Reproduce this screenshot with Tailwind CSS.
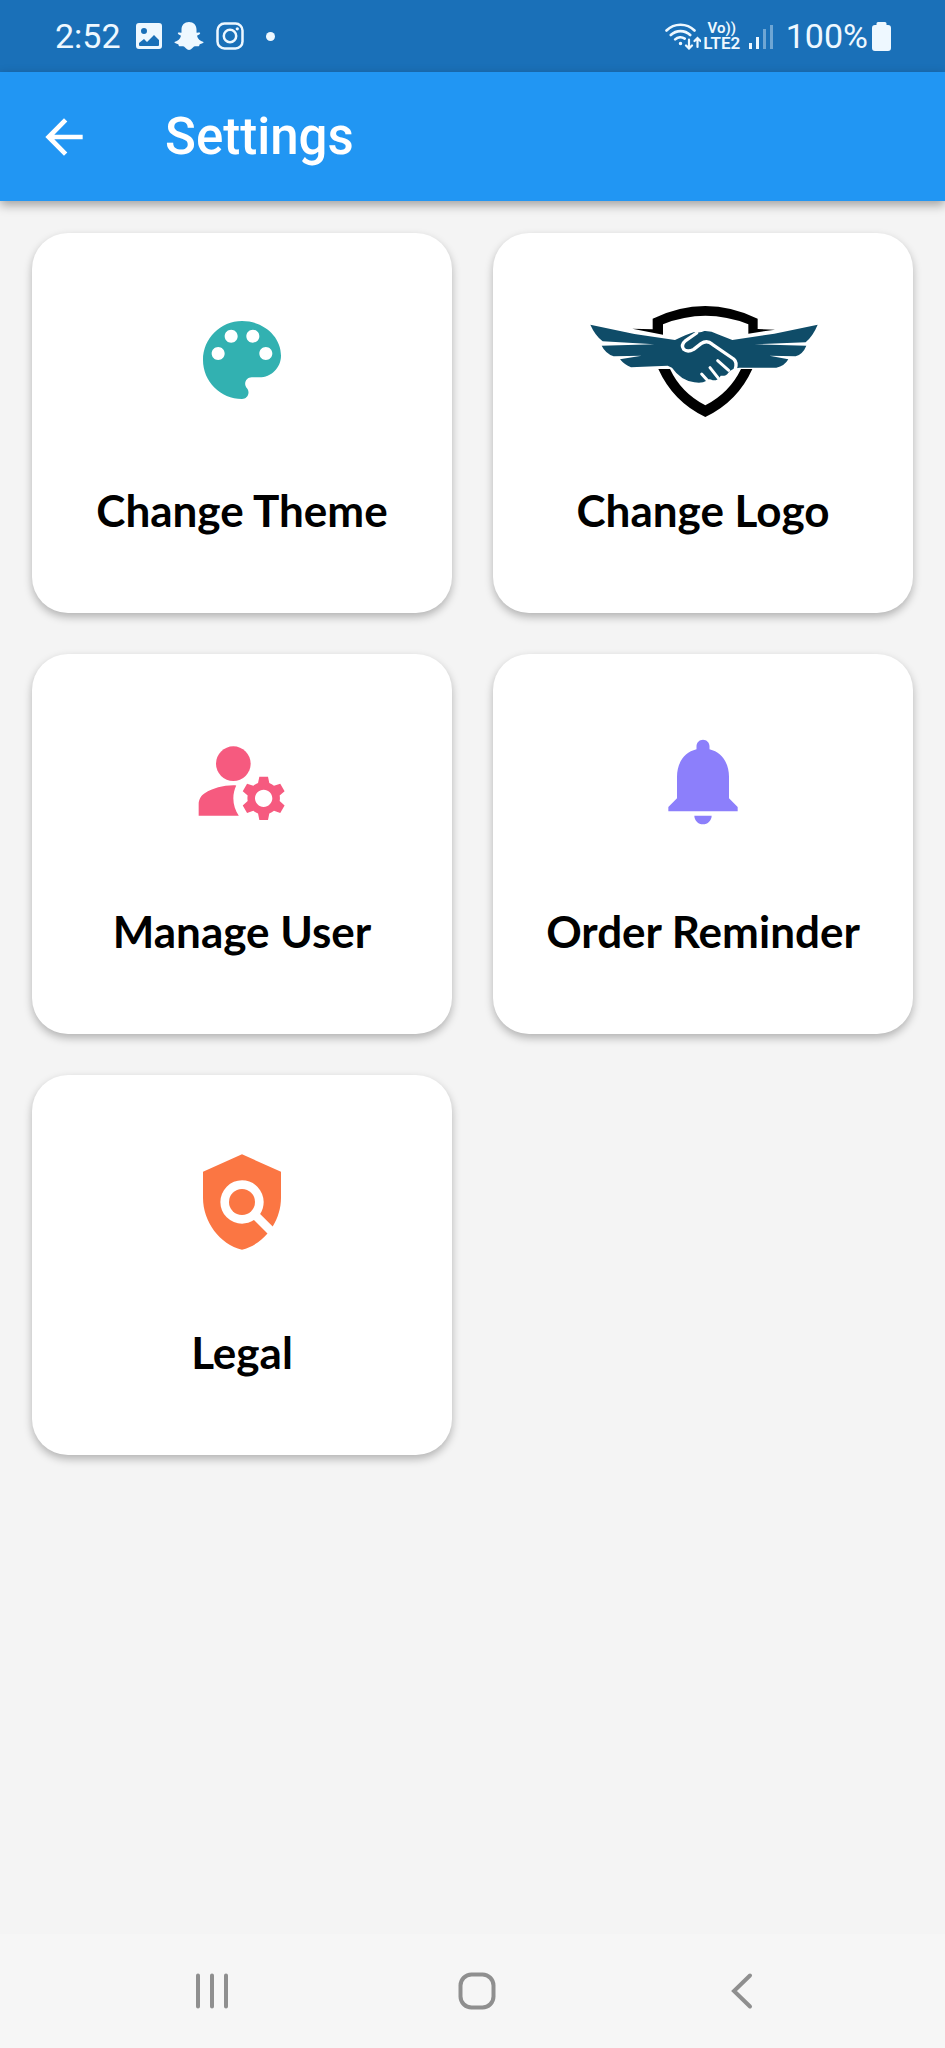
<!DOCTYPE html>
<html lang="en">
<head>
    <meta charset="UTF-8">
    <meta name="viewport" content="width=device-width, initial-scale=1.0">
    <title>Settings</title>
    <script src="https://cdn.jsdelivr.net/npm/@tailwindcss/browser@4"></script>
</head>
<body class="min-h-screen flex flex-col bg-[#f4f4f4] font-['Roboto',sans-serif]">
    <!-- Status bar -->
    <div class="h-[72px] shrink-0 bg-[#1a70b8] text-[#eef8ff] flex items-center justify-between pl-[55px] pr-[54px]">
        <div class="flex items-center">
            <span class="text-[34px] leading-10">2:52</span>
            <svg class="ml-[15px] size-[26px]" viewBox="0 0 26 26" fill="currentColor">
                <path fill-rule="evenodd" d="M3 0h20a3 3 0 0 1 3 3v20a3 3 0 0 1-3 3H3a3 3 0 0 1-3-3V3a3 3 0 0 1 3-3zM8 5a3 3 0 1 0 0 6a3 3 0 0 0 0-6zM3 22q0 1 1 1h18q1 0 1-1v-5l-5-5l-7 7l-3-3l-5 4z"/>
            </svg>
            <svg class="ml-3 w-[30px] h-7" viewBox="0 0 30 28" fill="currentColor">
                <path d="M15 0c4.500 0 7.500 3 7.500 7.500v3c1 .6 2.500-.6 3.500.3c.7 1-.8 2-3 3c.8 3.200 3 5.400 6.500 6.200c.6.900-1.500 1.800-3.700 2.200c-.6.700-.3 1.800-1.200 2c-1.200.2-3-.4-4.600.4C18.500 25.600 17.500 28 15 28s-3.500-2.400-5-3.400c-1.600-.8-3.400-.2-4.600-.4c-.9-.2-.6-1.300-1.200-2C2 21.800-.1 20.900.5 20C4 19.200 6.200 17 7 13.800c-2.200-1-3.700-2-3-3c1-.9 2.500.3 3.500-.3v-3C7.500 3 10.500 0 15 0z"/>
            </svg>
            <svg class="ml-3 size-7" viewBox="0 0 28 28" fill="none" stroke="currentColor">
                <rect x="1.500" y="1.500" width="25" height="25" rx="7" stroke-width="2.500"/>
                <circle cx="14" cy="14" r="6.200" stroke-width="2.500"/>
                <circle cx="21.300" cy="6.800" r="1.600" fill="currentColor" stroke="none"/>
            </svg>
            <span class="ml-[22px] size-[9px] rounded-full bg-current"></span>
        </div>
        <div class="flex items-center">
            <svg class="w-9 h-7" viewBox="0 0 36 28" fill="none" stroke="currentColor" stroke-width="2.600" stroke-linecap="round">
                <path d="M1.500 8.500a20 20 0 0 1 28 0M5.800 13a14 14 0 0 1 19.400 0M10.200 17.400a7.600 7.600 0 0 1 9.500-.8"/>
                <circle cx="15.500" cy="21.500" r="1" fill="currentColor" stroke-width="1.500"/>
                <path stroke-width="2.200" d="M24 17.500v8.500M21 23.500l3 3l3-3M32.500 25v-8.500M29.500 19l3-3l3 3"/>
            </svg>
            <div class="ml-[3px] w-9 flex flex-col items-center font-semibold text-[15px] leading-[15px] whitespace-nowrap">
                <span>Vo))</span>
                <span class="text-[17px] leading-[15px]">LTE2</span>
            </div>
            <div class="ml-[9px] flex items-end gap-1 h-[26px]">
                <span class="w-[3px] h-1.5 bg-current"></span>
                <span class="w-[3px] h-3 bg-current"></span>
                <span class="w-[3px] h-5 bg-current opacity-40"></span>
                <span class="w-[3px] h-6 bg-current opacity-40"></span>
            </div>
            <span class="ml-[13px] text-[34px] leading-10">100%</span>
            <svg class="ml-1 w-[19px] h-[29px]" viewBox="0 0 19 29" fill="currentColor">
                <path d="M6 0h7q1.500 0 1.500 1.500V3H16a3 3 0 0 1 3 3v20a3 3 0 0 1-3 3H3a3 3 0 0 1-3-3V6a3 3 0 0 1 3-3h1.500V1.500Q4.500 0 6 0z"/>
            </svg>
        </div>
    </div>

    <!-- App bar -->
    <header class="h-[129px] shrink-0 bg-[#2196f3] text-white flex items-center pl-9 shadow-[0_4px_10px_rgba(0,0,0,0.35)]">
        <button type="button" aria-label="Back" class="size-14">
            <svg class="size-14" viewBox="0 0 24 24" fill="currentColor">
                <path d="M20 11H7.830l5.590-5.590L12 4l-8 8 8 8 1.410-1.410L7.830 13H20v-2z"/>
            </svg>
        </button>
        <h1 class="ml-[73px] text-[51px] leading-[60px] font-medium">Settings</h1>
    </header>

    <!-- Settings cards -->
    <main class="flex-1 px-8 pt-8 pb-8">
        <div class="grid grid-cols-2 gap-[41px] font-['Lato',sans-serif] font-bold text-[44px] leading-[56px] text-black">
            <button type="button" class="h-[380px] pt-[57px] flex flex-col items-center rounded-[36px] bg-white shadow-[0_4px_8px_rgba(0,0,0,0.27)]">
                <span class="h-[140px] flex items-center">
                    <svg class="size-[104px] text-[#32b1b1]" viewBox="0 0 24 24" fill="currentColor">
                        <path d="M12 3c-4.970 0-9 4.030-9 9s4.030 9 9 9c.83 0 1.500-.67 1.500-1.500 0-.39-.15-.74-.39-1.010-.23-.26-.38-.61-.38-.99 0-.83.67-1.500 1.500-1.500H16c2.760 0 5-2.240 5-5 0-4.420-4.030-8-9-8zm-5.500 9c-.83 0-1.500-.67-1.500-1.500S5.670 9 6.500 9 8 9.670 8 10.500 7.330 12 6.500 12zm3-4C8.670 8 8 7.330 8 6.500S8.670 5 9.500 5s1.500.67 1.500 1.500S10.330 8 9.500 8zm5 0c-.83 0-1.500-.67-1.500-1.500S13.670 5 14.500 5s1.500.67 1.500 1.500S15.330 8 14.500 8zm3 4c-.83 0-1.500-.67-1.500-1.500S16.670 9 17.500 9s1.500.67 1.500 1.500-.67 1.500-1.500 1.500z"/>
                    </svg>
                </span>
                <span class="mt-[52px]">Change Theme</span>
            </button>

            <button type="button" class="h-[380px] pt-[57px] flex flex-col items-center rounded-[36px] bg-white shadow-[0_4px_8px_rgba(0,0,0,0.27)]">
                <span class="h-[140px] flex items-center">
                    <svg class="w-[265px] h-[140px]" viewBox="0 0 795 420">
                        <!-- shield -->
                        <path fill="#000" d="M245 86Q403 10 560 86V117L612 119L532 131V103Q403 52 276 103V134L184 116L245 118z"/>
                        <path fill="#000" d="M262 237H297Q330 308 403 346Q476 308 510 237H544Q500 335 403 381Q306 335 262 237z"/>
                        <!-- wings and hands -->
                        <g fill="#0f4c68">
                            <path d="M58 104L190 132L312 150Q345 134 370 126Q388 130 400 123Q420 122 440 133L484 150L610 131L740 104Q727 136 704 157L550 163L706 167Q696 192 674 199L595 197L652 208Q640 229 616 233H505L488 236Q476 242 472 248Q464 260 449 257Q443 272 425 271Q412 264 405 273Q395 280 370 277Q328 270 303 233L290 227L180 232Q160 224 147 208L212 197L128 199Q103 190 92 167L250 163L95 154Q72 136 58 104z"/>
                        </g>
                        <g fill="none" stroke="#fff" stroke-linecap="round" stroke-linejoin="round">
                            <path stroke-width="10" d="M377 129L345 151Q328 165 338 178Q350 188 368 178L390 161Q408 148 424 163L488 207Q499 217 493 236"/>
                            <path stroke-width="9" d="M440 212L473 241M417 233L443 266M392 252L409 271"/>
                        </g>
                    </svg>
                </span>
                <span class="mt-[52px]">Change Logo</span>
            </button>

            <button type="button" class="h-[380px] pt-[57px] flex flex-col items-center rounded-[36px] bg-white shadow-[0_4px_8px_rgba(0,0,0,0.27)]">
                <span class="h-[140px] flex items-center">
                    <svg class="size-[104px] text-[#f65a7f]" viewBox="0 0 24 24" fill="currentColor">
                        <circle cx="10" cy="8" r="4"/>
                        <path d="M10.670 13.020C10.450 13.010 10.230 13 10 13c-2.420 0-4.680.67-6.610 1.820C2.510 15.340 2 16.320 2 17.350V20h9.260C10.470 18.870 10 17.490 10 16c0-1.070.25-2.070.67-2.980z"/>
                        <path d="M20.750 16c0-.22-.03-.42-.06-.63l1.140-1.010-1-1.730-1.450.49c-.32-.27-.68-.48-1.080-.63L18 11h-2l-.3 1.490c-.4.15-.76.36-1.080.63l-1.450-.49-1 1.730 1.140 1.010c-.03.21-.06.41-.06.63s.03.42.06.63l-1.140 1.010 1 1.730 1.450-.49c.32.27.68.48 1.080.63L16 21h2l.3-1.490c.4-.15.76-.36 1.080-.63l1.450.49 1-1.730-1.140-1.010c.03-.21.06-.41.06-.63zM17 18c-1.100 0-2-.9-2-2s.9-2 2-2 2 .9 2 2-.9 2-2 2z"/>
                    </svg>
                </span>
                <span class="mt-[52px]">Manage User</span>
            </button>

            <button type="button" class="h-[380px] pt-[57px] flex flex-col items-center rounded-[36px] bg-white shadow-[0_4px_8px_rgba(0,0,0,0.27)]">
                <span class="h-[140px] flex items-center">
                    <svg class="size-[104px] text-[#8c7ffb]" viewBox="0 0 24 24" fill="currentColor">
                        <path d="M12 22c1.100 0 2-.9 2-2h-4c0 1.100.89 2 2 2zm6-6v-5c0-3.070-1.640-5.640-4.500-6.320V4c0-.83-.67-1.500-1.500-1.500s-1.500.67-1.500 1.500v.68C7.630 5.360 6 7.920 6 11v5l-2 2v1h16v-1l-2-2z"/>
                    </svg>
                </span>
                <span class="mt-[52px]">Order Reminder</span>
            </button>

            <button type="button" class="h-[380px] pt-[57px] flex flex-col items-center rounded-[36px] bg-white shadow-[0_4px_8px_rgba(0,0,0,0.27)]">
                <span class="h-[140px] flex items-center">
                    <svg class="size-[104px] text-[#fb7643]" viewBox="0 0 24 24" fill="currentColor">
                        <path d="M21 5l-9-4-9 4v6c0 5.550 3.840 10.740 9 12 2.300-.56 4.330-1.900 5.880-3.710l-3.120-3.120c-1.940 1.290-4.580 1.070-6.290-.64-1.950-1.950-1.950-5.120 0-7.070 1.950-1.950 5.120-1.950 7.070 0 1.710 1.710 1.920 4.350.64 6.290l2.900 2.900C20.290 15.690 21 13.380 21 11V5z"/>
                        <circle cx="12" cy="12" r="3"/>
                    </svg>
                </span>
                <span class="mt-[52px]">Legal</span>
            </button>
        </div>
    </main>

    <!-- Navigation bar -->
    <nav class="h-[114px] shrink-0 bg-[#f6f6f6] text-[#8f8f8f] flex items-center pl-20 pr-[71px]">
        <button type="button" aria-label="Recent apps" class="flex-1 flex justify-center">
            <svg class="size-10" viewBox="0 0 40 40" fill="none" stroke="currentColor" stroke-width="4" stroke-linecap="round">
                <path d="M6 4.500v31M20 4.500v31M34 4.500v31"/>
            </svg>
        </button>
        <button type="button" aria-label="Home" class="flex-1 flex justify-center">
            <svg class="size-10" viewBox="0 0 40 40" fill="none" stroke="currentColor" stroke-width="4">
                <rect x="3.500" y="3.500" width="33" height="33" rx="11"/>
            </svg>
        </button>
        <button type="button" aria-label="Back" class="flex-1 flex justify-center">
            <svg class="size-10" viewBox="0 0 40 40" fill="none" stroke="currentColor" stroke-width="4" stroke-linecap="round" stroke-linejoin="miter">
                <path d="M28 4.500L12 20l16 15.500"/>
            </svg>
        </button>
    </nav>
</body>
</html>
